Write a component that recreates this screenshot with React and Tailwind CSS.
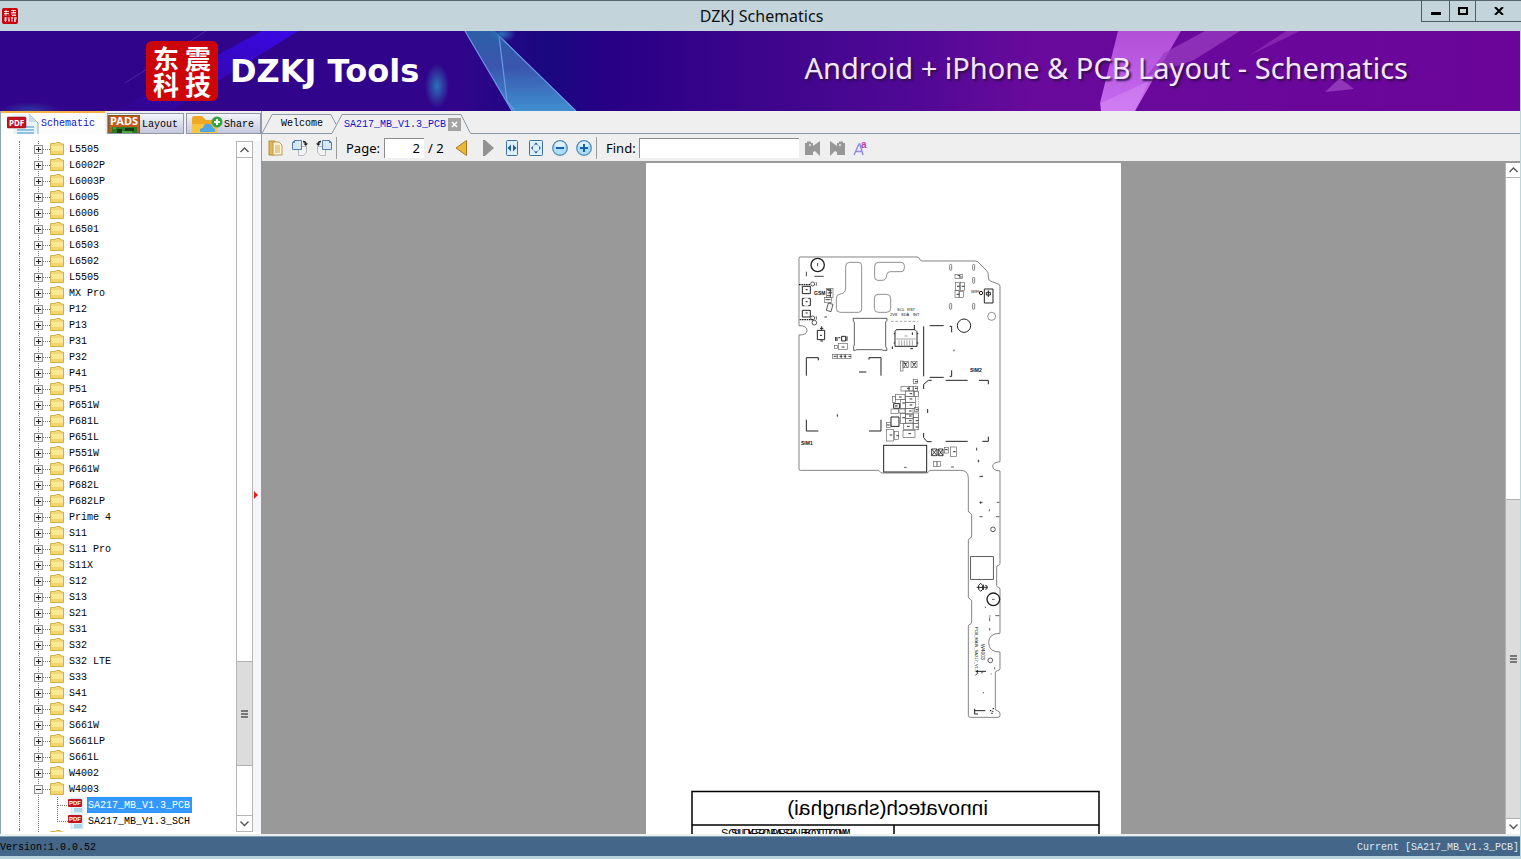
import { useState } from 'react';

const folders = [
  'L5505', 'L6002P', 'L6003P', 'L6005', 'L6006', 'L6501', 'L6503', 'L6502', 'L5505',
  'MX Pro', 'P12', 'P13', 'P31', 'P32', 'P41', 'P51', 'P651W', 'P681L', 'P651L', 'P551W',
  'P661W', 'P682L', 'P682LP', 'Prime 4', 'S11', 'S11 Pro', 'S11X', 'S12', 'S13', 'S21',
  'S31', 'S32', 'S32 LTE', 'S33', 'S41', 'S42', 'S661W', 'S661LP', 'S661L', 'W4002',
];

const files = ['SA217_MB_V1.3_PCB', 'SA217_MB_V1.3_SCH'];

/* ---------- icons ---------- */

function Expander({ open }) {
  return (
    <svg width="30" height="16" viewBox="0 0 30 16" shapeRendering="crispEdges" className="shrink-0">
      <path d="M18.5 0v16" stroke="#777" strokeDasharray="1 1" />
      <path d="M23 8.5h7" stroke="#777" strokeDasharray="1 1" />
      <rect x="14.5" y="4.5" width="8" height="8" fill="#f4f4f4" stroke="#919191" />
      <path d={open ? 'M16 8.5h5' : 'M16 8.5h5M18.5 6v5'} stroke="#222" />
    </svg>
  );
}

function FolderIcon() {
  return (
    <svg width="14" height="16" viewBox="0 0 14 16" className="shrink-0">
      <path d="M.5 4V2.5h4.500L6.500 1.500h3.500L11 3h2.500v10.500H.5z" fill="#f3d978" stroke="#d3b04c" />
      <path d="M1 5h12v8H1z" fill="#fbe995" />
      <path d="M1 10h12v3H1z" fill="#f2d66a" />
    </svg>
  );
}

function PdfIcon() {
  return (
    <svg width="16" height="16" viewBox="0 0 16 16" className="shrink-0">
      <path d="M3 1h9l3 3v12H3z" fill="#e4f2fa" stroke="#b5d3e4" strokeWidth=".6" />
      <path d="M6 12h8M6 14h8" stroke="#74b7d8" />
      <rect y="2" width="14" height="8" rx="1" fill="#c3141f" />
      <text x="1" y="8" fontSize="6" fontWeight="700" fill="#fff" fontFamily="Liberation Sans, sans-serif">PDF</text>
    </svg>
  );
}

function PdfTabIcon() {
  return (
    <svg width="32" height="20" viewBox="0 0 32 20" className="shrink-0">
      <path d="M6 0h16l9 8v12H6z" fill="#e9f4fb" />
      <path d="M22 0l9 9v11" fill="none" stroke="#93a9b8" />
      <path d="M22 0v8h8z" fill="#c9dbe6" />
      <path d="M10 13h17M10 16h17M10 19h17" stroke="#8cc4e0" strokeWidth="2" />
      <rect y="3" width="19" height="11" rx="1" fill="#bf1320" stroke="#8d0f17" strokeWidth=".5" />
      <text x="2" y="12" fontSize="8" fontWeight="700" fill="#fff" fontFamily="Noto Sans, sans-serif">PDF</text>
    </svg>
  );
}

function PadsIcon() {
  return (
    <svg width="32" height="18" viewBox="0 0 32 18" className="shrink-0">
      <rect width="32" height="18" fill="#c35a1b" />
      <rect x=".5" y=".5" width="31" height="17" fill="none" stroke="#7e5a24" />
      <text x="2" y="10" fontSize="11" fontWeight="700" fill="#fff" fontFamily="Noto Sans, sans-serif">PADS</text>
      <path d="M4 12h25v6H4z" fill="#2c7a24" />
      <path d="M9 14h5v4H9zM17 13h9v3h-9z" fill="#143a16" />
      <path d="M5 13h3M14 17h10" stroke="#6fce53" />
    </svg>
  );
}

function ShareIcon() {
  return (
    <svg width="32" height="18" viewBox="0 0 32 18" className="shrink-0">
      <path d="M1 18V3q0-2 2-2h8l4 4h10q2 0 2 2v11z" fill="#f0a826" />
      <path d="M1 18V9h26v9z" fill="#fbc540" />
      <path d="M9 17q-1-4 3-4 1-5 6-4 3 0 4 4 3 0 2 4z" fill="#4fa6e3" />
      <circle cx="26" cy="7" r="5.500" fill="#35a443" />
      <path d="M23 7h6M26 4v6" stroke="#fff" strokeWidth="2" />
    </svg>
  );
}

function CopyIcon() {
  return (
    <svg width="16" height="18" viewBox="0 0 16 18">
      <path d="M1 2h6v14H1z" fill="#e5b452" stroke="#b98a35" />
      <path d="M5 3h6l3 3v10H5z" fill="#fdf3d6" stroke="#b99a5c" />
      <path d="M7 7h5M7 9h5M7 11h5M7 13h5" stroke="#c9a95f" />
    </svg>
  );
}

function RotateIcon({ left }) {
  return (
    <svg width="16" height="18" viewBox="0 0 16 18" className={left ? '-scale-x-100' : ''}>
      <path d="M6.500 7.500h8v6l-3 3h-5z" fill="#f2f3f5" stroke="#b4b8bf" />
      <path d="M2.500 1.500h7v9h-9v-7z" fill="#d5e8fa" stroke="#557fb0" />
      <path d="M.5 3.500h2v-2" fill="none" stroke="#557fb0" />
      <path d="M11 2.500q3 0 3 3" fill="none" stroke="#222" strokeWidth="1.500" />
      <path d="M11.500 4.500h4.500l-2.200 2.500z" fill="#222" />
    </svg>
  );
}

function Arrow({ next }) {
  return (
    <svg width="16" height="18" viewBox="0 0 16 18">
      {next
        ? <path d="M3 1l2 0 9 8-9 8H3z" fill="#929292" />
        : <path d="M12.500 1.500v15L2 9z" fill="#e9b93d" stroke="#a87b1e" strokeLinejoin="round" />}
    </svg>
  );
}

function FitWidthIcon() {
  return (
    <svg width="16" height="18" viewBox="0 0 16 18">
      <rect x="2.500" y="1.500" width="11" height="15" rx="1" fill="#deeffc" stroke="#3d6f9f" />
      <path d="M7 5.500v7L3.500 9zM9 5.500v7l3.500-3.500z" fill="#2a5d94" />
    </svg>
  );
}

function FitPageIcon() {
  return (
    <svg width="16" height="18" viewBox="0 0 16 18">
      <rect x="1.500" y="1.500" width="13" height="15" rx="1" fill="#deeffc" stroke="#3d6f9f" />
      <path d="M8 3.500l2 2H6zM8 14.500l2-2H6zM3 9l2-2v4zM13 9l-2-2v4z" fill="#2a5d94" />
      <circle cx="8" cy="9" r="3.500" fill="none" stroke="#5a87b5" strokeDasharray="1 1" />
    </svg>
  );
}

function ZoomIcon({ plus }) {
  return (
    <svg width="16" height="18" viewBox="0 0 16 18">
      <circle cx="8" cy="9" r="7.300" fill="#aedcf8" stroke="#4a86b8" strokeWidth="1.200" />
      <ellipse cx="8" cy="5.500" rx="5" ry="3" fill="#dcf1fd" />
      <path d={plus ? 'M4 9h8M8 5v8' : 'M4 9h8'} stroke="#1364a6" strokeWidth="2" />
    </svg>
  );
}

function FindIcon({ next }) {
  return (
    <svg width="16" height="18" viewBox="0 0 16 18" className={next ? '-scale-x-100' : ''}>
      <path d="M0 4h2V2.500h4V4h2v3l7-5v15l-5-5-2 1v3H0z" fill="#979797" />
      <circle cx="5" cy="6" r="1.200" fill="#d8d8d8" />
    </svg>
  );
}

function CaseIcon() {
  return (
    <svg width="16" height="18" viewBox="0 0 16 18">
      <path d="M1 16L6 5h.8L10 16M3 12.500h6" fill="none" stroke="#8f86ee" strokeWidth="1.400" />
      <text x="8" y="9" fontSize="10" fontWeight="700" fill="#b845a8" fontFamily="Liberation Sans, sans-serif">a</text>
    </svg>
  );
}

function Chevron({ down }) {
  return (
    <svg width="9" height="6" viewBox="0 0 9 6">
      <path d={down ? 'M.5 .5l4 4 4-4' : 'M.5 5l4-4 4 4'} fill="none" stroke="#555" strokeWidth="1.400" />
    </svg>
  );
}

/* ---------- window parts ---------- */

function TitleBar() {
  return (
    <header className="flex h-[31px] shrink-0 border-t border-[#59656e] bg-[#c3d5db]">
      <div className="flex flex-1 basis-0 items-center pl-0.5">
        {/* same four characters as the banner seal, too small for text */}
        <svg width="16" height="16" viewBox="0 0 16 16" aria-hidden="true">
          <rect width="16" height="16" rx="2" fill="#c8000c" />
          <path
            d="M2 3.500h5M4 2v6M2 5.500h5M2 7.500l1-1M6 6.500l1 1M9 2.500h5M11.500 2v3M9 4.500h5M9 6h5M10 7.500h4M2 10h3M3.500 9v5M2 12h3M6 9.500v1M7 9v5M6 12h2M9 10h2M10 9v5M12 10h3M13 9v2M12 11.500h2l-2 2.500M12 12l2 2"
            fill="none"
            stroke="#fff"
            strokeWidth=".8"
          />
        </svg>
      </div>
      <h1 className="self-center text-[16px] text-[#101010] [font-family:'Noto_Sans',sans-serif]">DZKJ Schematics</h1>
      <div className="flex flex-1 basis-0 items-start justify-end">
        <button aria-label="Minimize" className="flex h-[21px] w-7 items-center justify-center border-b border-l border-[#4f5b64]">
          <svg width="10" height="10"><path d="M0 6h10v3H0z" /></svg>
        </button>
        <button aria-label="Maximize" className="flex h-[21px] w-[26px] items-center justify-center border-b border-l border-[#4f5b64]">
          <svg width="10" height="8"><rect x="1" y="1" width="8" height="6" fill="none" stroke="#000" strokeWidth="2" /></svg>
        </button>
        <button aria-label="Close" className="flex h-[21px] w-[46px] items-center justify-center border-b border-l border-[#4f5b64]">
          <svg width="10" height="8"><path d="M1 0l8 8M9 0L1 8" stroke="#000" strokeWidth="2" /></svg>
        </button>
      </div>
    </header>
  );
}

function BannerArt() {
  return (
    <svg className="absolute inset-0 size-full" viewBox="0 0 1520 80" preserveAspectRatio="none">
      <defs>
        <linearGradient id="base">
          <stop offset="0" stopColor="#31058b" />
          <stop offset=".3" stopColor="#31058b" />
          <stop offset=".36" stopColor="#1a0880" />
          <stop offset=".4" stopColor="#270086" />
          <stop offset=".5" stopColor="#3d058c" />
          <stop offset=".6" stopColor="#500895" />
          <stop offset=".68" stopColor="#690a9c" />
          <stop offset="1" stopColor="#6b0599" />
        </linearGradient>
        <linearGradient id="shard" x1="0" y1="0" x2="0" y2="1">
          <stop offset="0" stopColor="#2c5fa6" />
          <stop offset=".45" stopColor="#3a55ae" />
          <stop offset="1" stopColor="#3f8fd0" />
        </linearGradient>
        <linearGradient id="ray" x1="0" y1="0" x2="0" y2="1">
          <stop offset="0" stopColor="#b24fd6" />
          <stop offset="1" stopColor="#c56cf0" />
        </linearGradient>
        <linearGradient id="streak" x1="1" y1="0" x2="0" y2="1">
          <stop offset="0" stopColor="#3a08e6" />
          <stop offset="1" stopColor="#3a08e6" stopOpacity="0" />
        </linearGradient>
        <radialGradient id="glow">
          <stop offset="0" stopColor="#2b72b8" />
          <stop offset="1" stopColor="#2b72b8" stopOpacity="0" />
        </radialGradient>
      </defs>
      <rect width="1520" height="80" fill="url(#base)" />
      <path d="M262 0h36L170 80h-55z" fill="url(#streak)" />
      <path d="M206 0L125 52" stroke="#5b3bb0" opacity=".6" />
      <ellipse cx="437" cy="55" rx="12" ry="22" fill="url(#glow)" />
      <ellipse cx="30" cy="80" rx="30" ry="9" fill="url(#glow)" opacity=".5" />
      <path d="M465 0h30l81 80h-64z" fill="url(#shard)" />
      <path d="M465 0l47 80M498 4l78 76M499 5l8 65 8 10" fill="none" stroke="#6c98e6" strokeWidth="1.200" />
      <ellipse cx="502" cy="3" rx="14" ry="8" fill="url(#glow)" />
      <path d="M1118 0h63l-46 80h-34l-1-8z" fill="url(#ray)" />
      <path d="M1101 72l48-22-14 30h-34z" fill="#d98cf5" opacity=".5" />
      <path d="M1205 0h35l-46 29-48 17 18-24z" fill="#9a3cc0" opacity=".75" />
      <path d="M1286 0h14l-50 24z" fill="#8c2cb4" opacity=".8" />
      <path d="M1325 61l15-14 14 11z" fill="#9236b9" />
    </svg>
  );
}

function Banner() {
  return (
    <section className="relative flex h-20 shrink-0 items-center justify-between overflow-hidden bg-[#31058b] pr-28 pl-[146px]">
      <BannerArt />
      <div className="relative flex items-center gap-3">
        <div className="grid h-[60px] w-[72px] grid-cols-2 content-center justify-center justify-items-center rounded-md bg-[#cc0508] px-1 text-[26px] leading-[26px] font-bold text-white [font-family:'Noto_Sans_CJK_SC',sans-serif]">
          <span>东</span><span>震</span><span>科</span><span>技</span>
        </div>
        <p className="text-[32px] leading-none font-bold text-white [font-family:'DejaVu_Sans',sans-serif]">DZKJ Tools</p>
      </div>
      <p className="relative pb-2 text-[29px] leading-none whitespace-nowrap text-[#f4e6ff] [font-family:'Noto_Sans',sans-serif] [text-shadow:2px_2px_2px_#30104a]">
        Android + iPhone &amp; PCB Layout - Schematics
      </p>
    </section>
  );
}

function SideTabs() {
  return (
    <nav className="flex h-[23px] shrink-0 items-end gap-0.5 bg-[#efeff1]">
      <button className="flex h-[23px] w-[104px] items-center gap-0.5 overflow-hidden border-t-2 border-[#f5b041] bg-[#fdfdfe] pl-1.5 text-[#1010c8]">
        <PdfTabIcon />Schematic
      </button>
      <button className="flex h-[21px] w-[77px] items-center gap-0.5 overflow-hidden border border-[#8f97a8] bg-linear-to-b from-[#f4f5fa] to-[#c5c8de]">
        <PadsIcon /><span className="pt-0.5">Layout</span>
      </button>
      <button className="flex h-[21px] w-[75px] items-center gap-px overflow-hidden border border-[#8f97a8] bg-linear-to-b from-[#f4f5fa] to-[#c5c8de] pl-1">
        <ShareIcon /><span className="pt-0.5">Share</span>
      </button>
    </nav>
  );
}

function FolderRow({ name, open }) {
  return (
    <li className="flex h-4 items-center">
      <span className="h-4 w-[19px] shrink-0 border-r border-dotted border-[#777]" />
      <Expander open={open} />
      <FolderIcon />
      {name && <span className="pt-0.5 pl-[5px]">{name}</span>}
    </li>
  );
}

function FileRow({ name, selected, last, onSelect }) {
  return (
    <li className="flex h-4 items-center">
      <span className="h-4 w-[19px] shrink-0 border-r border-dotted border-[#777]" />
      <svg width="48" height="16" shapeRendering="crispEdges" className="shrink-0">
        <path d="M18.500 0v16" stroke="#777" strokeDasharray="1 1" />
        <path d={last ? 'M37.500 0v8.500h10' : 'M37.500 0v16M38 8.500h10'} fill="none" stroke="#777" strokeDasharray="1 1" />
      </svg>
      <PdfIcon />
      <button
        onClick={onSelect}
        className={selected
          ? 'ml-[3px] h-4 border border-dotted border-[#cc6a10] bg-[#3399ff] pr-px leading-[15px] text-white'
          : 'ml-[3px] h-4 pt-px pr-0.5 pl-px leading-[15px]'}
      >
        {name}
      </button>
    </li>
  );
}

function Sidebar({ current, setCurrent }) {
  return (
    <aside className="flex w-[261px] shrink-0 flex-col border-l border-[#8fa6b5] bg-white">
      <SideTabs />
      <div className="flex min-h-0 flex-1 pt-[7px] pb-0.5">
        <ul className="min-w-0 flex-1 overflow-hidden">
          {folders.map((name, i) => <FolderRow key={i} name={name} />)}
          <FolderRow name="W4003" open />
          {files.map((name, i) => (
            <FileRow
              key={name}
              name={name}
              last={i === files.length - 1}
              selected={name === current}
              onSelect={() => setCurrent(name)}
            />
          ))}
          <FolderRow />
        </ul>
        <div className="flex w-[17px] shrink-0 flex-col border border-[#b5b5b5]">
          <button aria-label="Scroll up" className="flex h-4 items-center justify-center border-b border-[#b5b5b5]"><Chevron /></button>
          <div className="flex-[504]" />
          <div className="flex h-[105px] items-center justify-center border-y border-[#b0b0b0] bg-[#dcdcdc]">
            <svg width="7" height="8"><path d="M0 1h7M0 4h7M0 7h7" stroke="#555" strokeWidth="1.500" /></svg>
          </div>
          <div className="flex-[49]" />
          <button aria-label="Scroll down" className="flex h-4 items-center justify-center border-t border-[#b5b5b5]"><Chevron down /></button>
        </div>
        <div className="flex w-2 shrink-0 items-center bg-[#f4f6f9] pt-4">
          <svg width="6" height="10"><path d="M1 1v8l4-4z" fill="#e02020" /></svg>
        </div>
      </div>
    </aside>
  );
}

function DocTabs() {
  return (
    <nav className="flex h-[23px] shrink-0 bg-[#efefef]">
      <button className="relative h-[23px] w-[70px] border-b border-[#8c99a6] pt-1 pl-2.5">
        <svg className="absolute inset-0" width="76" height="23">
          <path d="M0 22.500L10 3.500h59l5 10" fill="none" stroke="#8c99a6" />
        </svg>
        <span className="relative">Welcome</span>
      </button>
      <div className="relative flex h-[23px] w-[139px] items-center gap-0.5 pt-1 pl-3">
        <svg className="absolute inset-0" width="139" height="23">
          <path d="M0 22.500L10 3.500h119l9.500 19" fill="none" stroke="#8c99a6" />
        </svg>
        <button className="relative text-[#1010c8]">SA217_MB_V1.3_PCB</button>
        <button aria-label="Close tab" className="relative flex size-[13px] items-center justify-center bg-[#a3a3a3]">
          <svg width="7" height="7"><path d="M1 1l5 5M6 1L1 6" stroke="#fff" strokeWidth="1.600" /></svg>
        </button>
      </div>
      <div className="flex-1 border-b border-[#8c99a6]" />
    </nav>
  );
}

function Toolbar() {
  return (
    <div className="flex h-[29px] shrink-0 items-center border-b-2 border-[#999] bg-[#efefef] pl-1.5 text-[13px] [font-family:'Noto_Sans',sans-serif]">
      <div className="flex gap-2 pr-1">
        <button aria-label="Copy"><CopyIcon /></button>
        <button aria-label="Rotate right"><RotateIcon /></button>
        <button aria-label="Rotate left"><RotateIcon left /></button>
      </div>
      <div className="h-[22px] w-px bg-[#9c9c9c]" />
      <label htmlFor="page" className="w-[47px] pl-[9px]">Page:</label>
      <input id="page" defaultValue="2" className="h-5 w-10 border-t border-l border-[#8c8c8c] bg-white pr-1 text-right" />
      <span className="w-[30px] pl-1 whitespace-nowrap">/ 2</span>
      <div className="flex gap-2.5 pr-2">
        <button aria-label="Previous page"><Arrow /></button>
        <button aria-label="Next page"><Arrow next /></button>
      </div>
      <div className="flex gap-2 pr-1">
        <button aria-label="Fit width"><FitWidthIcon /></button>
        <button aria-label="Fit page"><FitPageIcon /></button>
        <button aria-label="Zoom out"><ZoomIcon /></button>
        <button aria-label="Zoom in"><ZoomIcon plus /></button>
      </div>
      <div className="h-[22px] w-px bg-[#9c9c9c]" />
      <label htmlFor="find" className="w-[42px] pl-[9px]">Find:</label>
      <input id="find" className="h-5 w-40 border-t border-l border-[#8c8c8c] bg-white px-1" />
      <div className="flex gap-2 pl-1.5">
        <button aria-label="Find previous"><FindIcon /></button>
        <button aria-label="Find next"><FindIcon next /></button>
        <button aria-label="Match case"><CaseIcon /></button>
      </div>
    </div>
  );
}

// small passives, x y w h in board units (3 per page pixel)
const parts = [
  [124, 130, 20, 28], [118, 158, 22, 14], [160, 296, 28, 18], [148, 302, 10, 8],
  [142, 328, 14, 12], [158, 328, 10, 12], [170, 328, 10, 12], [182, 328, 16, 12],
  [510, 88, 22, 12], [512, 112, 12, 24], [526, 112, 12, 24], [510, 136, 12, 22], [524, 140, 12, 18],
  [346, 348, 8, 30], [354, 350, 16, 18], [378, 350, 18, 18],
  [386, 404, 12, 12], [348, 424, 22, 14], [374, 424, 10, 14], [386, 424, 12, 14],
  [362, 438, 24, 16], [388, 440, 12, 14], [332, 448, 28, 16], [362, 454, 30, 18], [322, 454, 10, 18],
  [346, 464, 16, 28], [362, 472, 30, 18], [318, 492, 22, 14], [342, 490, 18, 14], [362, 490, 22, 16],
  [388, 488, 12, 12], [362, 508, 22, 12], [346, 506, 16, 30], [362, 520, 22, 14], [386, 504, 14, 14],
  [386, 518, 14, 18], [356, 536, 28, 18], [386, 536, 14, 18], [304, 532, 12, 16],
  [304, 554, 22, 34], [328, 560, 12, 24], [354, 556, 36, 22],
  [496, 606, 18, 28], [446, 650, 10, 14], [456, 650, 10, 14], [478, 608, 12, 16],
];

const pins = [
  [126, 134], [132, 142], [518, 92], [522, 96], [356, 356], [384, 356], [390, 410], [366, 430],
  [390, 430], [342, 456], [374, 446], [374, 462], [352, 474], [374, 480], [372, 498], [372, 513],
  [352, 518], [372, 527], [392, 527], [306, 540], [314, 570], [334, 572], [370, 566], [366, 544],
  [392, 494], [392, 546], [170, 306], [146, 334], [164, 334], [176, 334], [190, 334], [480, 614],
  [504, 620], [516, 124], [530, 124], [515, 148],
];

function BoardDrawing() {
  return (
    <svg
      className="block"
      width="475"
      height="671"
      viewBox="646 163 475 671"
      fill="none"
      stroke="#222"
      role="img"
      aria-label="PCB bottom layer"
    >
      <g transform="translate(785 245) scale(.33333)" strokeWidth="2.200">
        <path
          stroke="#555"
          d="M46 36H396q6 0 8 6t8 6H570q8 0 12 6l22 22q6 6 6 14v8q0 8 8 11l20 7q7 2 7 8V650q-22 2-22 14t22 14
             M42 40v202q24 0 24 14t-24 14V672q0 4 4 4H278q5 0 7 4t7 4H424q5 0 7-4t7-4h88q24 0 24 24v4
             M42 40q0-4 4-4"
        />
        <g transform="translate(465 585)">
          <path
            stroke="#555"
            d="M180 93V370q0 5-5 6t-5 6v54q0 5 5 6t5 6V580q-34 0-34 28t34 28v50q0 5-7 6t-7 6V806q0 5 7 7t7 8v5q0 6-6 6H91q-6 0-6-6V560q0-5 5-7t5-7v-62q0-5-5-7t-5-7V302q0-5 5-7t5-7v-62q0-5-5-7t-5-7V119"
          />
          <rect x="92" y="350" width="68" height="68" />
          <circle cx="160" cy="478" r="19" strokeWidth="4" />
          <circle cx="159" cy="268" r="7" />
          <circle cx="151" cy="661" r="7" />
          <path d="M110 442h32M116 436l6-6 6 6v12l-6 6-6-6zM130 434v16M136 436q6 0 6 6t-6 6" strokeWidth="3" />
          <path d="M108 694h30M112 690v10l-6 6M126 694v6M104 806v16h10M104 812h32" strokeWidth="3" />
          <path d="M150 812h4M158 806h4M154 820h4M157 814h3" strokeWidth="4" />
          <path d="M110 26v6M116 60v6M118 110h10M118 187h10M122 184v8M170 187h8M148 208v6M118 230h10M168 230h10M156 478h8M150 526v4M136 500v4M149 532v12M149 564v8M166 527h12M164 682v6M152 702h3M130 756v4" />
        </g>

        <circle cx="98" cy="60" r="20" strokeWidth="4" />
        <path d="M98 54v10M88 94h28M64 80v14M118 216h8" strokeWidth="2.500" />
        <path stroke="#666" d="M194 52h26q10 0 10 10v130q0 10-10 10h-54q-12 0-12-12v-30q0-12 12-13 16-2 16-18V64q0-12 12-12z" />
        <path stroke="#666" d="M280 52h68q10 0 10 10v8q0 10-10 10h-32q-10 0-11 10 0 16-14 16h-12q-10 0-10-10V64q0-12 11-12z" />
        <rect x="268" y="148" width="49" height="54" rx="12" stroke="#666" />
        <path d="M204 220H306v6q-4 4-4 8v70q4 6 4 12h-12l-4-2H216q-4 3-10 2v-12q3-4 2-8V234q-3-6-4-14z" />

        <path d="M52 124h24v22H52zM52 160h24v22H52zM52 196h24v20H52z" strokeWidth="3" />
        <path d="M58 160h12M58 182h12M62 136h6M62 170h6M62 206h6" stroke="#fff" strokeWidth="3" />
        <path d="M62 134h6M62 170h6M62 204h6" strokeWidth="3" />
        <path d="M42 119h34M44 224h42" strokeWidth="4" strokeDasharray="5 2" />
        <circle cx="83" cy="117" r="6" />
        <circle cx="83" cy="219" r="6" />
        <circle cx="88" cy="233" r="7" />
        <path d="M94 112v10M94 214v10" />
        <path d="M130 174l14 4-6 22-14-4z" />
        <path d="M128 136h12M128 144h12M136 130v26M126 152h12M122 164h14" strokeWidth="2.500" />
        <path d="M97 256h22v28H97zM110 256v-12M105 250h10M105 271h6M106 288h8" strokeWidth="3" />
        <path d="M170 274h12v14h-12zM166 278h-6M186 274v14M152 276v12M156 276v12" strokeWidth="3" />

        <path d="M64 392v-54h36v8M252 344v-6h36v54M64 524v34h36M252 558h36v-34" strokeWidth="3" />
        <path d="M222 381h22M157 508v7" strokeWidth="3" />

        <path d="M334 254h56l6 6v44h-66v-44zM326 266h4M326 294h4M396 266h4M396 294h4M382 262v8M322 304v8M376 311h8M388 240v14" strokeWidth="3" />
        <path d="M334 282h58M342 286v18M350 286v18M358 286v18M366 286v18M374 286v18M382 286v18M358 273h10" strokeWidth="2" stroke="#777" />
        <path d="M318 229h82" strokeDasharray="8 5" stroke="#888" />

        <path d="M416 244v150M434 242h42M434 397h42M494 244h6v18M500 376v18h-6" strokeWidth="3" />
        <circle cx="537" cy="242" r="20" strokeWidth="3" />
        <circle cx="620" cy="214" r="12" stroke="#666" />
        <path d="M507 314v5M428 492v12" strokeWidth="3" />
        <path d="M440 406h-10l-14 12v14M482 406h66M582 406h28v12M416 564v14l10 12h14M482 589h66M592 589h18v-14" strokeWidth="3" />
        <g stroke="#555">
          <rect x="494" y="58" width="6" height="18" rx="3" />
          <rect x="563" y="58" width="6" height="18" rx="3" />
          <rect x="563" y="97" width="6" height="18" rx="3" />
          <rect x="494" y="175" width="6" height="18" rx="3" />
          <rect x="563" y="175" width="6" height="18" rx="3" />
        </g>
        <path d="M598 132h26v42h-26zM610 136v20M604 142h12v8h-12z" strokeWidth="3" />
        <circle cx="588" cy="144" r="5" strokeWidth="3" />

        <rect x="296" y="601" width="129" height="80" strokeWidth="3" />
        <path d="M357 667h8M498 666h9M580 644v8M575 608v6M586 694h8" />
        <path d="M318 516h24v28h-24zM326 476h18v14h-18zM330 483h8" strokeWidth="3" />
        <path d="M440 612h16v20h-16zM460 612h14v20h-14zM440 612l16 20M460 612l14 20M456 612l-16 20M474 612l-14 20" strokeWidth="2.500" />
        <path d="M356 350l12 18M368 350l-12 18M380 350l14 18M394 350l-14 18" strokeWidth="2" />
        <path d="M400 440v116" strokeDasharray="4 3" stroke="#888" />
        <g stroke="#666" strokeWidth="2">
          {parts.map(([x, y, w, h], i) => <rect key={i} x={x} y={y} width={w} height={h} />)}
        </g>
        <g stroke="#333" strokeWidth="3">
          {pins.map(([x, y], i) => <path key={i} d={`M${x} ${y}h8`} />)}
        </g>
      </g>

      <g fill="#111" stroke="none" fontFamily="Liberation Sans, sans-serif">
        <g fontSize="5" fontWeight="700">
          <text x="814" y="295">GSM</text>
          <text x="801" y="445">SIM1</text>
          <text x="970" y="372">SIM2</text>
        </g>
        <g fontSize="4">
          <text x="971" y="293">WIFI</text>
          <text x="897" y="311">SCL</text>
          <text x="907" y="311">RST</text>
          <text x="890" y="316">2V8</text>
          <text x="901" y="316">SDA</text>
          <text x="913" y="316">INT</text>
        </g>
        <text transform="translate(975 627) rotate(90)" fontSize="4">PCB_MAIN_SA217_V1.3</text>
        <text transform="translate(981 644) rotate(90)" fontSize="5">W4003</text>
      </g>

      <g stroke="#000" strokeWidth="1.500">
        <path d="M692 834V791.500H1099V834M692 825H1099M894 825v9" />
      </g>
      <g fill="#000" stroke="none" fontFamily="Liberation Sans, sans-serif">
        <text transform="translate(988 815) scale(-1 1)" fontSize="21">innovatech(shanghai)</text>
        <text x="721" y="837" fontSize="11">SOLDERMASK BOTTOM</text>
        <text x="731" y="837" fontSize="11">SILKSCREEN BOTTOM</text>
      </g>
    </svg>
  );
}

function Viewer() {
  return (
    <div className="flex min-h-0 flex-1 bg-[#999]">
      <div className="min-w-0 flex-1 overflow-hidden">
        <div className="mx-auto w-[475px] bg-white">
          <BoardDrawing />
        </div>
      </div>
      <div className="flex w-[15px] shrink-0 flex-col border-l border-[#b5b5b5] bg-white">
        <button aria-label="Scroll up" className="flex h-[15px] items-center justify-center border-b border-[#b5b5b5]"><Chevron /></button>
        <div className="flex-1" />
        <div className="flex h-80 items-center justify-center border-y border-[#b0b0b0] bg-[#dcdcdc]">
          <svg width="7" height="8"><path d="M0 1h7M0 4h7M0 7h7" stroke="#555" strokeWidth="1.500" /></svg>
        </div>
        <button aria-label="Scroll down" className="flex h-[15px] items-center justify-center"><Chevron down /></button>
      </div>
    </div>
  );
}

export default function App() {
  const [current, setCurrent] = useState(files[0]);

  return (
    <div className="flex h-screen flex-col overflow-hidden bg-[#c3d5db] text-[10px] leading-4 text-black [font-family:'Liberation_Mono',monospace]">
      <TitleBar />
      <div className="flex min-h-0 flex-1 flex-col border-r border-[#b9d7df]">
        <Banner />
        <div className="flex min-h-0 flex-1 border-b-2 border-[#e8f0f4]">
          <Sidebar current={current} setCurrent={setCurrent} />
          <main className="flex min-w-0 flex-1 flex-col border-l border-[#999]">
            <DocTabs />
            <Toolbar />
            <Viewer />
          </main>
        </div>
        <footer className="flex h-5 shrink-0 items-end justify-between border-t border-[#7f9bb0] bg-[#446688]">
          <span>Version:1.0.0.52</span>
          <span className="pr-px text-[#dfeaf2]">Current [{current}]</span>
        </footer>
      </div>
      <div className="h-[3px] shrink-0 bg-[#b9d3dd]" />
    </div>
  );
}
